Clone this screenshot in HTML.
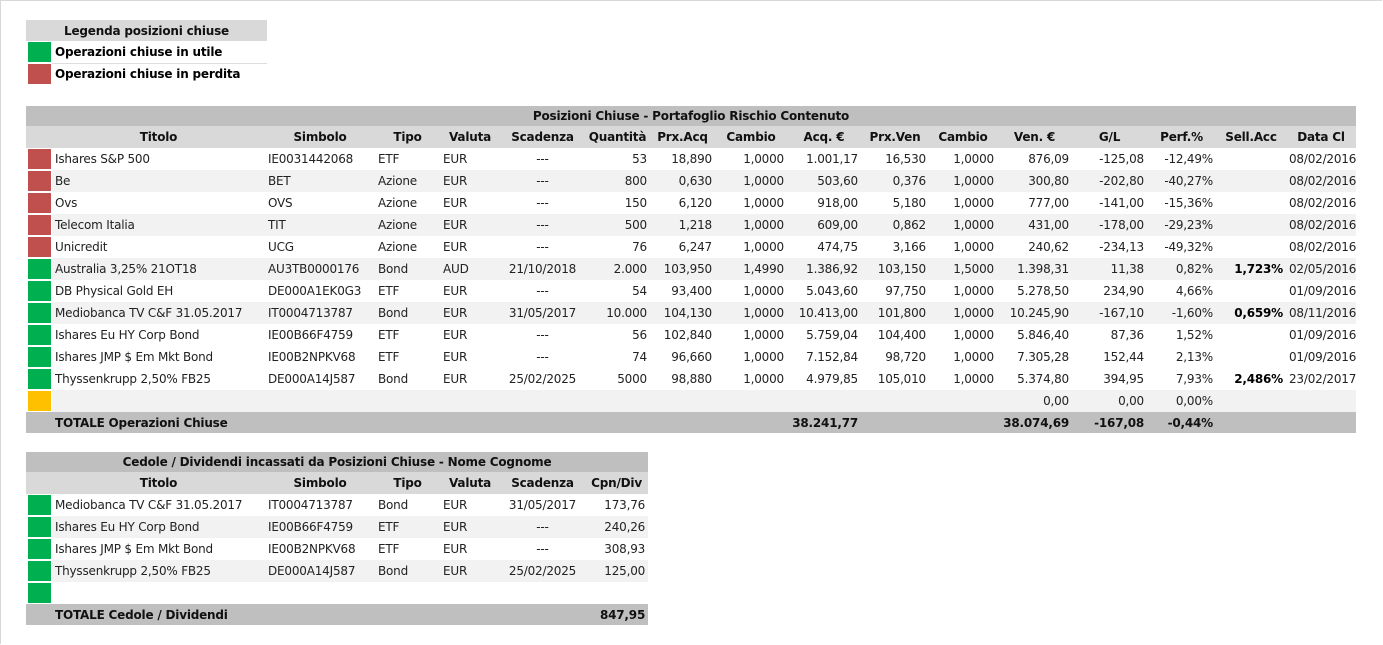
<!DOCTYPE html>
<html><head><meta charset="utf-8"><style>
html,body{margin:0;padding:0;background:#fff}
body{width:1381px;height:643px;border-top:1px solid #d8d8d8;border-left:1px solid #d8d8d8;position:relative;overflow:hidden;font-family:"DejaVu Sans","Liberation Sans",sans-serif;font-size:12px;color:#222}
table{border-collapse:collapse;table-layout:fixed;position:absolute}
td{padding:0 3px;height:22px;line-height:14px;white-space:nowrap;overflow:hidden;letter-spacing:-0.2px;box-sizing:border-box}
.r{text-align:right}.c{text-align:center}
.t td{background:#bfbfbf;font-weight:bold;color:#111;height:20px;text-align:center}
.h td{background:#d9d9d9;font-weight:bold;color:#111;height:22px;text-align:center}
.g td{background:#f2f2f2}
.tot td{background:#bfbfbf;font-weight:bold;color:#111;height:21px}
td.s{padding:1px 1px 1px 2px;background:#fff!important;height:22px}
td.s div{height:20px;width:23px}
.red{background:#c0504d}.grn{background:#00b050}.yel{background:#ffc000}
b{font-weight:bold;color:#000}
</style></head><body>

<table style="left:25px;top:19px;width:241px">
<col style="width:26px"><col style="width:215px">
<tr class="h"><td colspan="2" style="height:21px">Legenda posizioni chiuse</td></tr>
<tr><td class="s"><div class="grn"></div></td><td style="font-weight:bold;color:#000;border-bottom:1px solid #ddd">Operazioni chiuse in utile</td></tr>
<tr><td class="s"><div class="red"></div></td><td style="font-weight:bold;color:#000">Operazioni chiuse in perdita</td></tr>
</table>

<table style="left:25px;top:105px;width:1330px">
<col style="width:26px"><col style="width:213px"><col style="width:110px"><col style="width:65px"><col style="width:60px"><col style="width:85px"><col style="width:65px"><col style="width:65px"><col style="width:72px"><col style="width:74px"><col style="width:68px"><col style="width:68px"><col style="width:75px"><col style="width:75px"><col style="width:69px"><col style="width:70px"><col style="width:70px">
<tr class="t"><td colspan="17">Posizioni Chiuse - Portafoglio Rischio Contenuto</td></tr>
<tr class="h"><td></td><td>Titolo</td><td>Simbolo</td><td>Tipo</td><td>Valuta</td><td>Scadenza</td><td>Quantità</td><td>Prx.Acq</td><td>Cambio</td><td>Acq. €</td><td>Prx.Ven</td><td>Cambio</td><td>Ven. €</td><td>G/L</td><td>Perf.%</td><td>Sell.Acc</td><td>Data Cl</td></tr>
<tr><td class="s"><div class="red"></div></td><td>Ishares S&amp;P 500</td><td>IE0031442068</td><td>ETF</td><td>EUR</td><td class="c">---</td><td class="r">53</td><td class="r">18,890</td><td class="r">1,0000</td><td class="r">1.001,17</td><td class="r">16,530</td><td class="r">1,0000</td><td class="r">876,09</td><td class="r">-125,08</td><td class="r">-12,49%</td><td></td><td class="r">08/02/2016</td></tr>
<tr class="g"><td class="s"><div class="red"></div></td><td>Be</td><td>BET</td><td>Azione</td><td>EUR</td><td class="c">---</td><td class="r">800</td><td class="r">0,630</td><td class="r">1,0000</td><td class="r">503,60</td><td class="r">0,376</td><td class="r">1,0000</td><td class="r">300,80</td><td class="r">-202,80</td><td class="r">-40,27%</td><td></td><td class="r">08/02/2016</td></tr>
<tr><td class="s"><div class="red"></div></td><td>Ovs</td><td>OVS</td><td>Azione</td><td>EUR</td><td class="c">---</td><td class="r">150</td><td class="r">6,120</td><td class="r">1,0000</td><td class="r">918,00</td><td class="r">5,180</td><td class="r">1,0000</td><td class="r">777,00</td><td class="r">-141,00</td><td class="r">-15,36%</td><td></td><td class="r">08/02/2016</td></tr>
<tr class="g"><td class="s"><div class="red"></div></td><td>Telecom Italia</td><td>TIT</td><td>Azione</td><td>EUR</td><td class="c">---</td><td class="r">500</td><td class="r">1,218</td><td class="r">1,0000</td><td class="r">609,00</td><td class="r">0,862</td><td class="r">1,0000</td><td class="r">431,00</td><td class="r">-178,00</td><td class="r">-29,23%</td><td></td><td class="r">08/02/2016</td></tr>
<tr><td class="s"><div class="red"></div></td><td>Unicredit</td><td>UCG</td><td>Azione</td><td>EUR</td><td class="c">---</td><td class="r">76</td><td class="r">6,247</td><td class="r">1,0000</td><td class="r">474,75</td><td class="r">3,166</td><td class="r">1,0000</td><td class="r">240,62</td><td class="r">-234,13</td><td class="r">-49,32%</td><td></td><td class="r">08/02/2016</td></tr>
<tr class="g"><td class="s"><div class="grn"></div></td><td>Australia 3,25% 21OT18</td><td>AU3TB0000176</td><td>Bond</td><td>AUD</td><td class="c">21/10/2018</td><td class="r">2.000</td><td class="r">103,950</td><td class="r">1,4990</td><td class="r">1.386,92</td><td class="r">103,150</td><td class="r">1,5000</td><td class="r">1.398,31</td><td class="r">11,38</td><td class="r">0,82%</td><td class="r"><b>1,723%</b></td><td class="r">02/05/2016</td></tr>
<tr><td class="s"><div class="grn"></div></td><td>DB Physical Gold EH</td><td>DE000A1EK0G3</td><td>ETF</td><td>EUR</td><td class="c">---</td><td class="r">54</td><td class="r">93,400</td><td class="r">1,0000</td><td class="r">5.043,60</td><td class="r">97,750</td><td class="r">1,0000</td><td class="r">5.278,50</td><td class="r">234,90</td><td class="r">4,66%</td><td></td><td class="r">01/09/2016</td></tr>
<tr class="g"><td class="s"><div class="grn"></div></td><td>Mediobanca TV C&amp;F 31.05.2017</td><td>IT0004713787</td><td>Bond</td><td>EUR</td><td class="c">31/05/2017</td><td class="r">10.000</td><td class="r">104,130</td><td class="r">1,0000</td><td class="r">10.413,00</td><td class="r">101,800</td><td class="r">1,0000</td><td class="r">10.245,90</td><td class="r">-167,10</td><td class="r">-1,60%</td><td class="r"><b>0,659%</b></td><td class="r">08/11/2016</td></tr>
<tr><td class="s"><div class="grn"></div></td><td>Ishares Eu HY Corp Bond</td><td>IE00B66F4759</td><td>ETF</td><td>EUR</td><td class="c">---</td><td class="r">56</td><td class="r">102,840</td><td class="r">1,0000</td><td class="r">5.759,04</td><td class="r">104,400</td><td class="r">1,0000</td><td class="r">5.846,40</td><td class="r">87,36</td><td class="r">1,52%</td><td></td><td class="r">01/09/2016</td></tr>
<tr><td class="s"><div class="grn"></div></td><td>Ishares JMP $ Em Mkt Bond</td><td>IE00B2NPKV68</td><td>ETF</td><td>EUR</td><td class="c">---</td><td class="r">74</td><td class="r">96,660</td><td class="r">1,0000</td><td class="r">7.152,84</td><td class="r">98,720</td><td class="r">1,0000</td><td class="r">7.305,28</td><td class="r">152,44</td><td class="r">2,13%</td><td></td><td class="r">01/09/2016</td></tr>
<tr><td class="s"><div class="grn"></div></td><td>Thyssenkrupp 2,50% FB25</td><td>DE000A14J587</td><td>Bond</td><td>EUR</td><td class="c">25/02/2025</td><td class="r">5000</td><td class="r">98,880</td><td class="r">1,0000</td><td class="r">4.979,85</td><td class="r">105,010</td><td class="r">1,0000</td><td class="r">5.374,80</td><td class="r">394,95</td><td class="r">7,93%</td><td class="r"><b>2,486%</b></td><td class="r">23/02/2017</td></tr>
<tr class="g"><td class="s"><div class="yel"></div></td><td></td><td></td><td></td><td></td><td></td><td></td><td></td><td></td><td></td><td></td><td></td><td class="r">0,00</td><td class="r">0,00</td><td class="r">0,00%</td><td></td><td></td></tr>
<tr class="tot"><td></td><td colspan="2">TOTALE Operazioni Chiuse</td><td></td><td></td><td></td><td></td><td></td><td></td><td class="r">38.241,77</td><td></td><td></td><td class="r">38.074,69</td><td class="r">-167,08</td><td class="r">-0,44%</td><td></td><td></td></tr>
</table>

<table style="left:25px;top:451px;width:622px">
<col style="width:26px"><col style="width:213px"><col style="width:110px"><col style="width:65px"><col style="width:60px"><col style="width:85px"><col style="width:63px">
<tr class="t"><td colspan="7">Cedole / Dividendi incassati da Posizioni Chiuse - Nome Cognome</td></tr>
<tr class="h"><td></td><td>Titolo</td><td>Simbolo</td><td>Tipo</td><td>Valuta</td><td>Scadenza</td><td>Cpn/Div</td></tr>
<tr><td class="s"><div class="grn"></div></td><td>Mediobanca TV C&amp;F 31.05.2017</td><td>IT0004713787</td><td>Bond</td><td>EUR</td><td class="c">31/05/2017</td><td class="r">173,76</td></tr>
<tr class="g"><td class="s"><div class="grn"></div></td><td>Ishares Eu HY Corp Bond</td><td>IE00B66F4759</td><td>ETF</td><td>EUR</td><td class="c">---</td><td class="r">240,26</td></tr>
<tr><td class="s"><div class="grn"></div></td><td>Ishares JMP $ Em Mkt Bond</td><td>IE00B2NPKV68</td><td>ETF</td><td>EUR</td><td class="c">---</td><td class="r">308,93</td></tr>
<tr class="g"><td class="s"><div class="grn"></div></td><td>Thyssenkrupp 2,50% FB25</td><td>DE000A14J587</td><td>Bond</td><td>EUR</td><td class="c">25/02/2025</td><td class="r">125,00</td></tr>
<tr><td class="s"><div class="grn"></div></td><td></td><td></td><td></td><td></td><td></td><td></td></tr>
<tr class="tot"><td></td><td colspan="2">TOTALE Cedole / Dividendi</td><td></td><td></td><td></td><td class="r">847,95</td></tr>
</table>
</body></html>
